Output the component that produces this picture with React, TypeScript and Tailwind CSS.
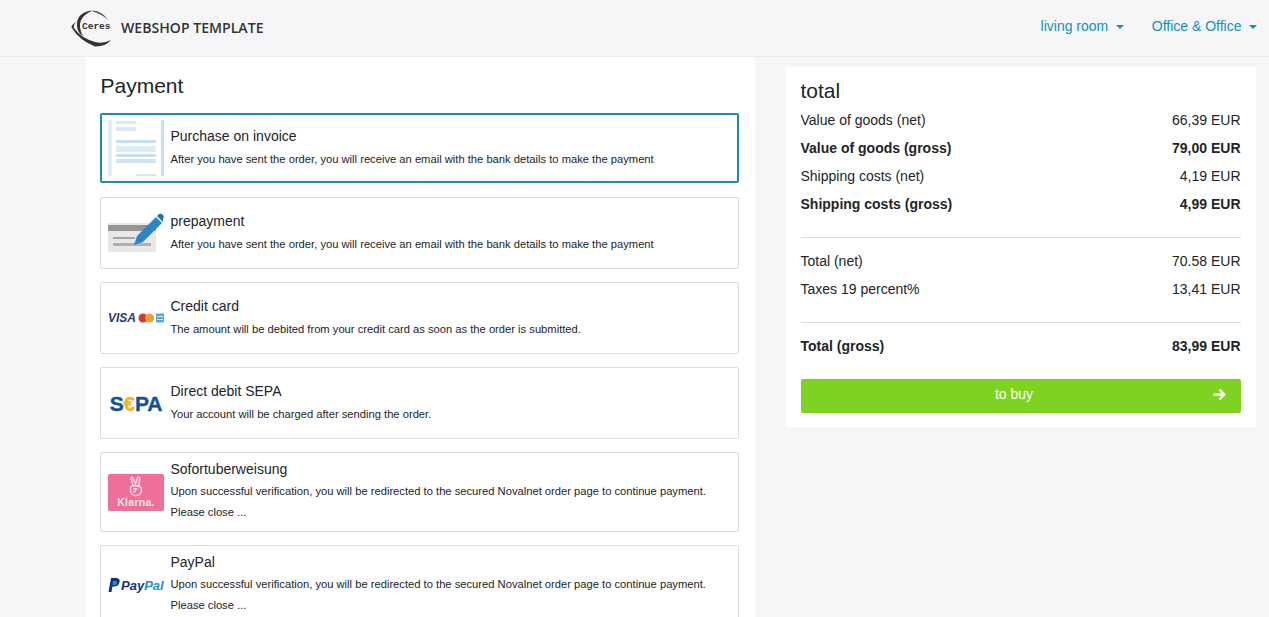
const longText =
  "Upon successful verification, you will be redirected to the secured Novalnet order page to continue payment.";
const bankText =
  "After you have sent the order, you will receive an email with the bank details to make the payment";

const InvoiceIcon = () => (
  <svg width="56" height="56" viewBox="0 0 56 56">
    <rect x="0" y="0" width="4" height="56" fill="#deedf7" />
    <rect x="53" y="0" width="3" height="56" fill="#c4e0f2" />
    <rect x="8" y="1" width="20" height="3" fill="#d6e9f5" />
    <rect x="8" y="7" width="20" height="4" fill="#d6e9f5" />
    <rect x="8" y="20" width="40" height="3" fill="#c4e0f2" />
    <rect x="8" y="26" width="40" height="6" fill="#dcecf7" />
    <rect x="8" y="34" width="40" height="3" fill="#c4e0f2" />
    <rect x="8" y="39" width="40" height="4" fill="#cfe5f4" />
    <rect x="28" y="54" width="20" height="2" fill="#d6e9f5" />
  </svg>
);

const PrepaymentIcon = () => (
  <svg width="56" height="40" viewBox="0 0 56 40">
    <rect x="0" y="10" width="48" height="29" fill="#e8e8e8" />
    <rect x="0" y="12" width="48" height="6" fill="#969696" />
    <rect x="5" y="24" width="22" height="2" fill="#a4a4a4" />
    <rect x="5" y="30" width="38" height="3" fill="#b0b0b0" />
    <path d="M26 32 L29 23 L48 4 L54 10 L35 29 Z" fill="#2a86c4" />
    <path d="M49 3 L51 1 Q53 0 55 2 Q56.5 4 55 6 L55 9 Z" fill="#1f74ae" />
  </svg>
);

const CardsIcon = () => (
  <div className="flex w-14 items-center justify-between">
    <span className="font-['Liberation_Sans',sans-serif] text-[12px] leading-none font-bold text-[#2b3a78] italic">
      VISA
    </span>
    <svg width="26" height="10" viewBox="0 0 26 10">
      <circle cx="5" cy="5" r="4.5" fill="#d9362b" />
      <circle cx="11.5" cy="5" r="4.5" fill="#eda02f" />
      <rect x="18" y="0.5" width="8" height="9" fill="#5aa9dc" />
      <rect x="19" y="3" width="6" height="1" fill="#d8ecf8" />
      <rect x="19" y="6" width="6" height="1" fill="#d8ecf8" />
    </svg>
  </div>
);

const SepaIcon = () => (
  <div className="flex w-14 items-center justify-center font-['Liberation_Sans',sans-serif] text-[21px] leading-none font-bold tracking-[-0.2px] text-[#10519b] [-webkit-text-stroke:0.4px_#10519b]">
    S<span className="text-[#f2b81d] [-webkit-text-stroke:0.4px_#f2b81d]">€</span>PA
  </div>
);

const KlarnaIcon = () => (
  <div className="flex h-[37px] w-14 flex-col items-center justify-center rounded-[2px] bg-[#ee7098] text-white">
    <svg width="16" height="21" viewBox="0 0 16 21" fill="none" stroke="#fbdbe5" strokeWidth="1.4">
      <path d="M5 10 L3 2 Q3 1 4.5 1 L7.5 8 L10 1 Q11.5 1 12 2 L10.5 10" />
      <path d="M2.5 12 Q2.5 10 5 10 L10 10 Q13.5 10.5 13.5 14 Q13 19.5 8 19.5 Q3 19.5 2.5 15 Z" />
      <path d="M5 13 L9.5 13 M5 16 L8 15" />
    </svg>
    <span className="font-['Liberation_Sans',sans-serif] text-[10.5px] leading-[11px] font-bold tracking-[0.3px] text-[#fbe4ec]">
      Klarna.
    </span>
  </div>
);

const PaypalIcon = () => (
  <div className="flex w-14 items-center">
    <svg width="13" height="15" viewBox="0 0 13 15" className="shrink-0">
      <path d="M3 0 H8.5 Q12.5 0.5 11.5 4.5 Q10.5 8.5 6 8.5 H4.5 L3.5 14 H0.5 Z" fill="#12357f" />
      <path d="M5 3 H8 Q9.5 3.5 9 5.5 Q8.5 7 6.5 7 H4.5 Z" fill="#1f8fd1" />
    </svg>
    <span className="font-['Liberation_Sans',sans-serif] text-[13px] leading-none font-bold whitespace-nowrap text-[#12357f] italic">
      Pay<span className="text-[#1f8fd1]">Pal</span>
    </span>
  </div>
);

type Method = {
  title: string;
  lines: string[];
  icon: React.ReactNode;
  selected?: boolean;
  tall?: boolean;
};

const methods: Method[] = [
  { title: "Purchase on invoice", lines: [bankText], icon: <InvoiceIcon />, selected: true },
  { title: "prepayment", lines: [bankText], icon: <PrepaymentIcon /> },
  {
    title: "Credit card",
    lines: ["The amount will be debited from your credit card as soon as the order is submitted."],
    icon: <CardsIcon />,
  },
  { title: "Direct debit SEPA", lines: ["Your account will be charged after sending the order."], icon: <SepaIcon /> },
  { title: "Sofortuberweisung", lines: [longText, "Please close ..."], icon: <KlarnaIcon />, tall: true },
  { title: "PayPal", lines: [longText, "Please close ..."], icon: <PaypalIcon />, tall: true },
];

const PaymentCard = ({ method }: { method: Method }) => (
  <div
    className={
      method.selected
        ? "mb-[14px] flex h-[70px] items-center rounded-[2px] border-2 border-[#1a8cb4] pl-[6px]"
        : method.tall
          ? "mb-[13px] flex h-[80px] shrink-0 items-center rounded-[2px] border border-[#dcdcdc] pl-[7px]"
          : "mb-[13px] flex h-[72px] items-center rounded-[2px] border border-[#dcdcdc] pl-[7px]"
    }
  >
    <div className="flex w-14 shrink-0 items-center justify-center">{method.icon}</div>
    <div className={method.tall ? "ml-[6.5px] pb-[2px]" : "ml-[6.5px]"}>
      <div className="text-[14px] leading-[21px] text-[#212529]">{method.title}</div>
      {method.lines.map((line, i) => (
        <div
          key={line}
          className={
            method.tall && i > 0
              ? "mt-[0.6px] text-[11.2px] leading-[21px] text-[#212529]"
              : method.tall
                ? "mt-[1px] text-[11.2px] leading-[21px] text-[#212529]"
                : "mt-[2px] text-[11.2px] leading-[21px] text-[#212529]"
          }
        >
          {line}
        </div>
      ))}
    </div>
  </div>
);

const TotalRow = ({ label, value, bold }: { label: string; value: string; bold?: boolean }) => (
  <div className={bold ? "flex h-[28px] items-center justify-between font-bold" : "flex h-[28px] items-center justify-between"}>
    <span>{label}</span>
    <span>{value}</span>
  </div>
);

const Caret = () => (
  <span className="ml-[7.5px] inline-block h-0 w-0 border-x-[4.5px] border-t-[4.5px] border-x-transparent border-t-[#0f92bd] align-[2px]" />
);

export default function App() {
  return (
    <div className="h-[617px] overflow-hidden bg-[#f6f6f9] font-['Liberation_Sans',Arial,sans-serif] text-[14px] text-[#212529]">
      <header className="flex h-[57px] items-center justify-between border-b border-[#ececee] pr-[12px] pl-[71px]">
        <div className="flex items-center">
          <div className="relative h-[38px] w-[41px]">
            <svg width="41" height="40" viewBox="0 0 41 40" className="absolute top-0 left-0">
              <path d="M22 1.5 Q5 3 6 17 Q6.5 24 12 27 Q8.5 21 9 15 Q10 6 22 1.5 Z" fill="#333333" />
              <path d="M22 1.5 Q31 2 37 11 Q31 5 22 2.5 Z" fill="#555555" />
              <path d="M5 13 Q-1 17 1 19 Q8 31 24 37.5 Q34 38 40 31 Q32 35 24 33 Q10 29 3 19 Q2 17 5 13 Z" fill="#333333" />
            </svg>
            <span className="absolute top-[13px] left-[11px] font-['Liberation_Mono',monospace] text-[9.5px] leading-[10px] font-bold text-[#333333]">
              Ceres
            </span>
          </div>
          <span className="ml-[9px] font-['Open_Sans',sans-serif] text-[14.1px] font-semibold text-[#333333]">
            WEBSHOP TEMPLATE
          </span>
        </div>
        <nav className="flex items-center gap-[27px] pb-[4px] text-[#0f92bd]">
          <span className="mr-[1px]">
            living room
            <Caret />
          </span>
          <span>
            Office &amp; Office
            <Caret />
          </span>
        </nav>
      </header>

      <main className="flex items-start">
        <section className="ml-[86px] h-[560px] w-[669px] bg-white pr-[16px] pl-[14px]">
          <h1 className="pt-[15px] pb-[13px] pl-[0.5px] text-[21px] leading-[28px] font-normal">Payment</h1>
          {methods.map((method) => (
            <PaymentCard key={method.title} method={method} />
          ))}
        </section>

        <aside className="mt-[10px] ml-[31px] h-[360px] w-[470px] bg-white pt-[10px] pr-[15.5px] pl-[14.5px]">
          <h2 className="pb-[1px] text-[21px] leading-[28px] font-normal">total</h2>
          <TotalRow label="Value of goods (net)" value="66,39 EUR" />
          <TotalRow label="Value of goods (gross)" value="79,00 EUR" bold />
          <TotalRow label="Shipping costs (net)" value="4,19 EUR" />
          <TotalRow label="Shipping costs (gross)" value="4,99 EUR" bold />
          <hr className="mt-[19px] mb-[9px] border-[#dcdcdc]" />
          <TotalRow label="Total (net)" value="70.58 EUR" />
          <TotalRow label="Taxes 19 percent%" value="13,41 EUR" />
          <hr className="mt-[19px] mb-[9px] border-[#dcdcdc]" />
          <TotalRow label="Total (gross)" value="83,99 EUR" bold />
          <button className="relative mt-[19px] flex h-[34px] w-full items-center justify-center rounded-[2px] bg-[#7ed321] pr-[13px] pb-[4px] text-white">
            to buy
            <svg width="13" height="13" viewBox="0 0 13 13" className="absolute top-[9px] right-[15px]" fill="none" stroke="#ffffff" strokeWidth="2.4">
              <path d="M0.5 6.5 H11 M6.5 1.5 L11.2 6.5 L6.5 11.5" />
            </svg>
          </button>
        </aside>
      </main>
    </div>
  );
}
